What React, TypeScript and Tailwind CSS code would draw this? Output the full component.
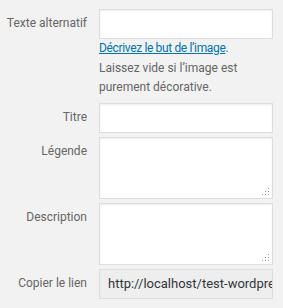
import React from 'react';

const ResizeDots: React.FC = () => (
  <svg className="absolute right-[3px] bottom-[3px]" width="9" height="9" viewBox="0 0 9 9">
    {[
      [7, 1],
      [4, 4],
      [7, 4],
      [1, 7],
      [4, 7],
      [7, 7],
    ].map(([x, y]) => (
      <rect key={`${x}-${y}`} x={x} y={y} width="1" height="1" fill="#9a9a9a" />
    ))}
  </svg>
);

const Label: React.FC<{ children: React.ReactNode }> = ({ children }) => (
  <label className="w-[87px] shrink-0 text-right text-[#666] leading-[19px] pt-[5px] whitespace-nowrap">{children}</label>
);

const fieldBox = 'block w-[174px] border border-[#dddddd] bg-white shadow-[inset_0_1px_2px_rgba(0,0,0,0.07)]';

export default function App() {
  return (
    <div className="w-[283px] h-[308px] bg-[#f2f2f2] font-['Roboto',sans-serif] text-[12px] pt-[9px] overflow-hidden">
      <div className="flex gap-[12px]">
        <Label>Texte alternatif</Label>
        <div className="flex flex-col">
          <input className={`${fieldBox} h-[30px] outline-none`} />
          <p className="leading-[19.5px] text-[#666] w-[174px]">
            <a href="#" className="text-[#0073aa] underline tracking-[-0.35px]">
              Décrivez le but de l’image
            </a>
            .<br />
            Laissez vide si l’image est
            <br />
            purement décorative.
          </p>
        </div>
      </div>

      <div className="flex gap-[12px] mt-[5px]">
        <Label>Titre</Label>
        <input className={`${fieldBox} h-[30px] outline-none`} />
      </div>

      <div className="flex gap-[12px] mt-[4px]">
        <Label>Légende</Label>
        <div className="relative">
          <textarea className={`${fieldBox} h-[62px] resize-none outline-none`} />
          <ResizeDots />
        </div>
      </div>

      <div className="flex gap-[12px] mt-[4px]">
        <Label>Description</Label>
        <div className="relative">
          <textarea className={`${fieldBox} h-[62px] resize-none outline-none`} />
          <ResizeDots />
        </div>
      </div>

      <div className="flex gap-[12px] mt-[4px]">
        <Label>Copier le lien</Label>
        <div className="w-[174px] h-[30px] border border-[#dddddd] bg-[#eeeeee] pl-[8px] text-[13px] leading-[28px] text-[#32373c] whitespace-nowrap overflow-hidden">
          http://localhost/test-wordpre
        </div>
      </div>
    </div>
  );
}
